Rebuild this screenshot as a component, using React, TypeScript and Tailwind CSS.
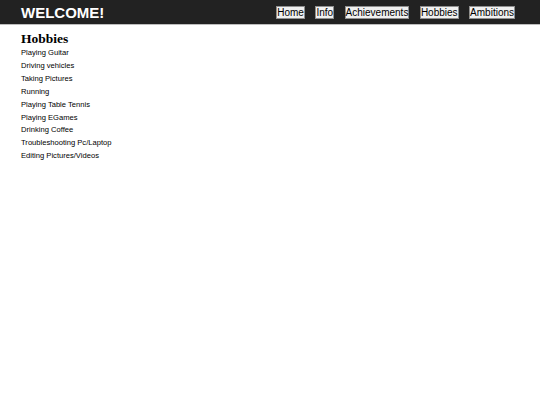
import React from 'react';

const links = ['Home', 'Info', 'Achievements', 'Hobbies', 'Ambitions'];

const hobbies = [
  'Playing Guitar',
  'Driving vehicles',
  'Taking Pictures',
  'Running',
  'Playing Table Tennis',
  'Playing EGames',
  'Drinking Coffee',
  'Troubleshooting Pc/Laptop',
  'Editing Pictures/Videos',
];

export default function App() {
  return (
    <div className="min-h-[405px] bg-white font-['Liberation_Sans',Arial,sans-serif]">
      <header className="flex h-[25px] items-center justify-between border-b border-[#bdbdbd] bg-[#222222] pl-[21px] pr-[25px]">
        <h1 className="text-[15px] font-bold leading-none text-white">WELCOME!</h1>
        <nav className="flex gap-[10.5px]">
          {links.map((l) => (
            <a
              key={l}
              href="#"
              className="border border-[#8f8f8f] bg-[#f0f0f0] text-[10px] leading-[11px] text-black"
            >
              {l}
            </a>
          ))}
        </nav>
      </header>
      <main className="px-[21px] pt-[6px]">
        <h2 className="font-['Liberation_Serif','Times_New_Roman',serif] text-[13.5px] font-bold leading-[15px] text-black">
          Hobbies
        </h2>
        <ul className="mt-[1px]">
          {hobbies.map((h) => (
            <li key={h} className="text-[7.6px] leading-[12.9px] text-black">
              {h}
            </li>
          ))}
        </ul>
      </main>
    </div>
  );
}
